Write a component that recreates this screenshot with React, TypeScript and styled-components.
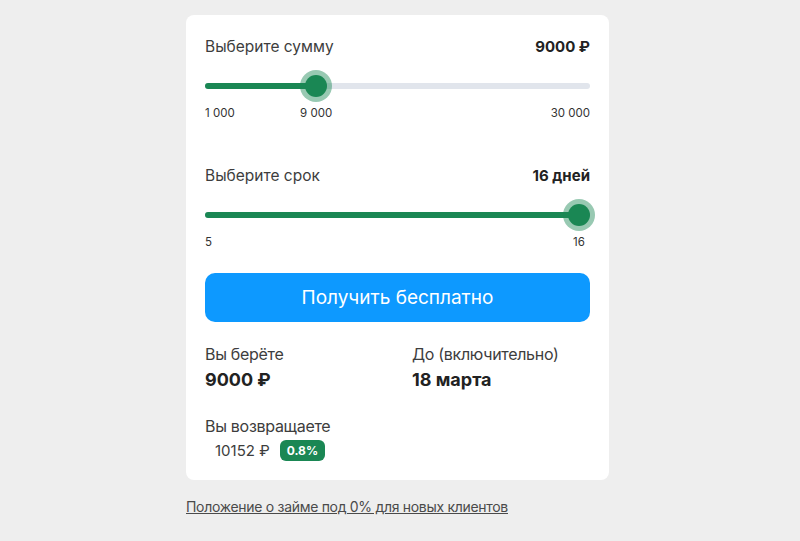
import styled, { createGlobalStyle } from 'styled-components'

const GlobalStyle = createGlobalStyle`
    html, body {
        margin: 0;
        padding: 0;
        background: #eeeeee;
        font-family: Inter, "Noto Sans", sans-serif;
    }
`

interface SliderProps {
    min: number
    max: number
    value: number
    format: (n: number) => string
}

const THUMB = 22

const RangeSlider = ({ min, max, value, format }: SliderProps) => {
    const frac = (value - min) / (max - min)
    const center = `calc(${THUMB / 2}px + ${frac} * (100% - ${THUMB}px))`
    return (
        <SliderBox>
            <Track>
                <Fill style={{ width: center }} />
                <Thumb style={{ left: center }} />
            </Track>
            <Marks>
                <Mark>{format(min)}</Mark>
                {value !== max && <Mark>{format(max)}</Mark>}
                <ValueMark style={{ left: center }}>{format(value)}</ValueMark>
            </Marks>
        </SliderBox>
    )
}

const fmt = (n: number) => n.toLocaleString('ru-RU').replace(/\s/g, ' ')

export default function App() {
    return (
        <Page>
            <GlobalStyle />
            <Column>
                <Card>
                    <Section>
                        <Header>
                            <Label>Выберите сумму</Label>
                            <Strong>9000 ₽</Strong>
                        </Header>
                        <RangeSlider min={1000} max={30000} value={9000} format={fmt} />
                    </Section>
                    <Section $gap={45}>
                        <Header>
                            <Label>Выберите срок</Label>
                            <Strong>16 дней</Strong>
                        </Header>
                        <RangeSlider min={5} max={16} value={16} format={(n) => String(n)} />
                    </Section>
                    <Button>Получить бесплатно</Button>
                    <Summary>
                        <Cell>
                            <Caption>Вы берёте</Caption>
                            <Big>9000 ₽</Big>
                        </Cell>
                        <Cell>
                            <Caption>До (включительно)</Caption>
                            <Big>18 марта</Big>
                        </Cell>
                    </Summary>
                    <Return>
                        <Caption>Вы возвращаете</Caption>
                        <ReturnRow>
                            <ReturnValue>10152 ₽</ReturnValue>
                            <Badge>0.8%</Badge>
                        </ReturnRow>
                    </Return>
                </Card>
                <Link href="#">Положение о займе под 0% для новых клиентов</Link>
            </Column>
        </Page>
    )
}

const Page = styled.div`
    display: flex;
    justify-content: center;
    padding: 15px 5px 0 0;
`
const Column = styled.div`
    width: 423px;
    display: flex;
    flex-direction: column;
`
const Card = styled.div`
    background: #ffffff;
    border-radius: 8px;
    padding: 21px 19px 19px 19px;
    display: flex;
    flex-direction: column;
`
const Section = styled.div<{ $gap?: number }>`
    margin-top: ${(p) => p.$gap ?? 0}px;
`
const Header = styled.div`
    display: flex;
    justify-content: space-between;
    align-items: center;
    height: 20px;
`
const Label = styled.span`
    font-size: 15.5px;
    color: #3d3d3d;
`
const Strong = styled.span`
    font-size: 15px;
    font-weight: 700;
    color: #222222;
`
const SliderBox = styled.div`
    margin-top: 15px;
`
const Track = styled.div`
    position: relative;
    height: 30px;
    &::before {
        content: '';
        position: absolute;
        left: 0;
        right: 0;
        top: 12px;
        height: 6px;
        border-radius: 3px;
        background: #e1e5ec;
    }
`
const Fill = styled.div`
    position: absolute;
    left: 0;
    top: 12px;
    height: 6px;
    border-radius: 3px;
    background: #1a8754;
`
const Thumb = styled.div`
    position: absolute;
    top: 4px;
    width: ${THUMB}px;
    height: ${THUMB}px;
    margin-left: -${THUMB / 2}px;
    border-radius: 50%;
    background: #1a8754;
    box-shadow: 0 0 0 5px rgba(26, 135, 84, 0.45);
`
const Marks = styled.div`
    position: relative;
    display: flex;
    justify-content: space-between;
    margin-top: 5px;
    height: 14px;
`
const Mark = styled.span`
    font-size: 11.5px;
    line-height: 14px;
    color: #333333;
`
const ValueMark = styled(Mark)`
    position: absolute;
    top: 0;
    transform: translateX(-50%);
    white-space: nowrap;
`
const Button = styled.button`
    margin-top: 24px;
    height: 49px;
    border: none;
    border-radius: 10px;
    background: #0d99ff;
    color: #ffffff;
    font-family: inherit;
    font-size: 19px;
    cursor: pointer;
`
const Summary = styled.div`
    display: grid;
    grid-template-columns: 207px 1fr;
    margin-top: 22px;
`
const Cell = styled.div`
    display: flex;
    flex-direction: column;
    gap: 4px;
`
const Caption = styled.span`
    font-size: 16px;
    line-height: 20px;
    color: #3d3d3d;
    letter-spacing: -0.3px;
`
const Big = styled.span`
    font-size: 18px;
    line-height: 24px;
    font-weight: 700;
    color: #222222;
`
const Return = styled.div`
    margin-top: 24px;
    display: flex;
    flex-direction: column;
    gap: 4px;
`
const ReturnRow = styled.div`
    display: flex;
    align-items: center;
    gap: 10px;
    padding-left: 10px;
    height: 21px;
`
const ReturnValue = styled.span`
    font-size: 15px;
    color: #3d3d3d;
`
const Badge = styled.span`
    background: #1a8754;
    color: #ffffff;
    font-size: 12px;
    font-weight: 700;
    padding: 3px 7px;
    border-radius: 6px;
`
const Link = styled.a`
    margin-top: 18px;
    font-size: 14px;
    line-height: 18px;
    color: #4a4a4a;
    letter-spacing: -0.3px;
    text-decoration: underline;
    align-self: flex-start;
`
